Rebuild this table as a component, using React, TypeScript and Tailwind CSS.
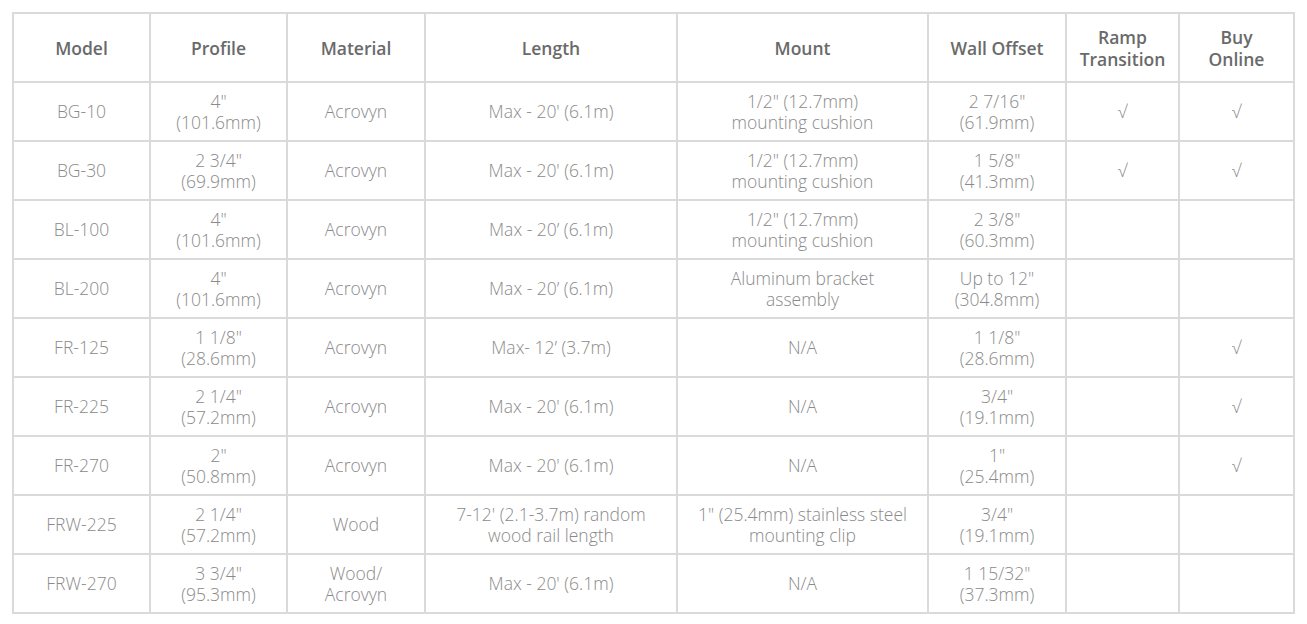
import React from "react";

type Row = {
  model: string;
  profile: [string, string];
  material: string[];
  length: string[];
  mount: string[];
  offset: [string, string];
  ramp?: boolean;
  buy?: boolean;
};

const rows: Row[] = [
  { model: "BG-10", profile: ['4"', "(101.6mm)"], material: ["Acrovyn"], length: ["Max - 20' (6.1m)"], mount: ['1/2" (12.7mm)', "mounting cushion"], offset: ['2 7/16"', "(61.9mm)"], ramp: true, buy: true },
  { model: "BG-30", profile: ['2 3/4"', "(69.9mm)"], material: ["Acrovyn"], length: ["Max - 20' (6.1m)"], mount: ['1/2" (12.7mm)', "mounting cushion"], offset: ['1 5/8"', "(41.3mm)"], ramp: true, buy: true },
  { model: "BL-100", profile: ['4"', "(101.6mm)"], material: ["Acrovyn"], length: ["Max - 20\u2019 (6.1m)"], mount: ['1/2" (12.7mm)', "mounting cushion"], offset: ['2 3/8"', "(60.3mm)"] },
  { model: "BL-200", profile: ['4"', "(101.6mm)"], material: ["Acrovyn"], length: ["Max - 20\u2019 (6.1m)"], mount: ["Aluminum bracket", "assembly"], offset: ['Up to 12"', "(304.8mm)"] },
  { model: "FR-125", profile: ['1 1/8"', "(28.6mm)"], material: ["Acrovyn"], length: ["Max- 12\u2019 (3.7m)"], mount: ["N/A"], offset: ['1 1/8"', "(28.6mm)"], buy: true },
  { model: "FR-225", profile: ['2 1/4"', "(57.2mm)"], material: ["Acrovyn"], length: ["Max - 20' (6.1m)"], mount: ["N/A"], offset: ['3/4"', "(19.1mm)"], buy: true },
  { model: "FR-270", profile: ['2"', "(50.8mm)"], material: ["Acrovyn"], length: ["Max - 20' (6.1m)"], mount: ["N/A"], offset: ['1"', "(25.4mm)"], buy: true },
  { model: "FRW-225", profile: ['2 1/4"', "(57.2mm)"], material: ["Wood"], length: ["7-12' (2.1-3.7m) random", "wood rail length"], mount: ['1" (25.4mm) stainless steel', "mounting clip"], offset: ['3/4"', "(19.1mm)"] },
  { model: "FRW-270", profile: ['3 3/4"', "(95.3mm)"], material: ["Wood/", "Acrovyn"], length: ["Max - 20' (6.1m)"], mount: ["N/A"], offset: ['1 15/32"', "(37.3mm)"] },
];

const widths = [137, 137, 138, 252, 251, 138, 113, 115];

const Lines = ({ lines }: { lines: string[] }) => (
  <>
    {lines.map((l, i) => (
      <div key={i}>{l}</div>
    ))}
  </>
);

const td = "border-2 border-[#dadada] text-center align-middle h-[59px] p-0 leading-[21px]";
const th = "border-2 border-[#dadada] text-center align-middle h-[69px] p-0 leading-[22px] font-semibold text-[#6a6a6a]";

export default function App() {
  return (
    <div className="bg-white w-[1307px] h-[624px] pt-[12px] pl-[12px] font-['Open_Sans',sans-serif]">
      <table className="border-collapse table-fixed w-[1283px] text-[17.5px]">
        <colgroup>
          {widths.map((w, i) => (
            <col key={i} style={{ width: w }} />
          ))}
        </colgroup>
        <thead>
          <tr>
            <th className={th}>Model</th>
            <th className={th}>Profile</th>
            <th className={th}>Material</th>
            <th className={th}>Length</th>
            <th className={th}>Mount</th>
            <th className={th}>Wall Offset</th>
            <th className={th}>
              Ramp
              <br />
              Transition
            </th>
            <th className={th}>
              Buy
              <br />
              Online
            </th>
          </tr>
        </thead>
        <tbody className="font-light text-[#8a8a8a]">
          {rows.map((r) => (
            <tr key={r.model}>
              <td className={td}>{r.model}</td>
              <td className={td}><Lines lines={r.profile} /></td>
              <td className={td}><Lines lines={r.material} /></td>
              <td className={td}><Lines lines={r.length} /></td>
              <td className={td}><Lines lines={r.mount} /></td>
              <td className={td}><Lines lines={r.offset} /></td>
              <td className={td}>{r.ramp ? "\u221A" : ""}</td>
              <td className={td}>{r.buy ? "\u221A" : ""}</td>
            </tr>
          ))}
        </tbody>
      </table>
    </div>
  );
}
